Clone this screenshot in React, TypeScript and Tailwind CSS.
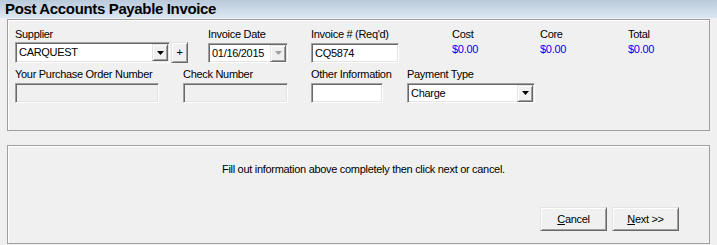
import React from 'react';

const sunken =
  'border border-t-[#a0a0a0] border-l-[#a0a0a0] border-b-white border-r-white shadow-[inset_1px_1px_0_#696969,inset_-1px_-1px_0_#e3e3e3]';
const raised =
  'border border-t-[#e3e3e3] border-l-[#e3e3e3] border-b-[#696969] border-r-[#696969] shadow-[inset_1px_1px_0_#fff,inset_-1px_-1px_0_#a0a0a0] bg-[#f0f0f0]';
const txt = 'text-[11px] tracking-[-0.3px] text-black whitespace-nowrap';

function Label({ children }: { children: React.ReactNode }) {
  return <div className={`h-[13px] leading-[13px] ${txt}`}>{children}</div>;
}

function Arrow({ disabled }: { disabled?: boolean }) {
  return (
    <svg width="7" height="4" viewBox="0 0 7 4">
      <polygon points="0,0 7,0 3.5,4" fill={disabled ? '#a0a0a0' : '#000'} />
    </svg>
  );
}

function DropBtn({ disabled }: { disabled?: boolean }) {
  return (
    <div className={`${raised} w-[16px] h-[17px] mr-[1px] flex items-center justify-center shrink-0`}>
      <Arrow disabled={disabled} />
    </div>
  );
}

function TextBox({ w, value, disabled }: { w: string; value?: string; disabled?: boolean }) {
  return (
    <div
      className={`${sunken} ${w} h-[20px] mt-[2px] flex items-center pl-[3px] ${txt} ${
        disabled ? 'bg-[#f0f0f0]' : 'bg-white'
      }`}
    >
      {value}
    </div>
  );
}

function Combo({ w, value, disabled, h = 'h-[20px]' }: { w: string; value: string; disabled?: boolean; h?: string }) {
  return (
    <div className={`${sunken} ${w} ${h} bg-white flex items-center pl-[3px] ${txt}`}>
      <span className="flex-1">{value}</span>
      <DropBtn disabled={disabled} />
    </div>
  );
}

function Money({ label }: { label: string }) {
  return (
    <div className="w-[88px] shrink-0">
      <Label>{label}</Label>
      <div className="mt-[2px] h-[13px] leading-[13px] text-[11px] tracking-[-0.3px] text-[#0000ff]">$0.00</div>
    </div>
  );
}

function Button({ children }: { children: React.ReactNode }) {
  return (
    <div className={`${raised} w-[67px] h-[24px] flex items-center justify-center ${txt}`}>{children}</div>
  );
}

export default function App() {
  return (
    <div className="w-[717px] h-[245px] bg-[#f0f0f0] font-['Liberation_Sans',Arial,sans-serif] overflow-hidden">
      <div className="h-[18px] bg-gradient-to-b from-[#b9cadb] to-[#dce7f2] pl-[5px] flex items-center">
        <span className="text-[15px] font-bold tracking-[-0.35px] text-black leading-[18px]">
          Post Accounts Payable Invoice
        </span>
      </div>

      <div className="mt-[1px] mx-[7px] h-[112px] border border-[#a0a0a0] shadow-[inset_1px_1px_0_#fff] pl-[7px] pt-[8px]">
        <div className="flex">
          <div className="w-[193px] shrink-0">
            <Label>Supplier</Label>
            <div className="flex mt-[1px]">
              <Combo w="w-[155px]" h="h-[21px]" value="CARQUEST" />
              <div className={`${raised} ml-[1px] w-[17px] h-[21px] flex items-center justify-center ${txt}`}>+</div>
            </div>
          </div>
          <div className="w-[103px] shrink-0">
            <Label>Invoice Date</Label>
            <div className="mt-[2px]">
              <Combo w="w-[80px]" value="01/16/2015" disabled />
            </div>
          </div>
          <div className="w-[141px] shrink-0">
            <Label>Invoice # (Req'd)</Label>
            <TextBox w="w-[88px]" value="CQ5874" />
          </div>
          <Money label="Cost" />
          <Money label="Core" />
          <Money label="Total" />
        </div>

        <div className="flex mt-[5px]">
          <div className="w-[168px] shrink-0">
            <Label>Your Purchase Order Number</Label>
            <TextBox w="w-[144px]" disabled />
          </div>
          <div className="w-[128px] shrink-0">
            <Label>Check Number</Label>
            <TextBox w="w-[105px]" disabled />
          </div>
          <div className="w-[96px] shrink-0">
            <Label>Other Information</Label>
            <TextBox w="w-[72px]" />
          </div>
          <div className="shrink-0">
            <Label>Payment Type</Label>
            <div className="mt-[2px]">
              <Combo w="w-[128px]" value="Charge" />
            </div>
          </div>
        </div>
      </div>

      <div className="mt-[14px] mx-[7px] h-[99px] border border-[#a0a0a0] shadow-[inset_1px_1px_0_#fff] flex flex-col">
        <div className={`pt-[17px] pl-[214px] h-[13px] leading-[13px] box-content ${txt}`}>
          Fill out information above completely then click next or cancel.
        </div>
        <div className="mt-auto mb-[12px] mr-[30px] flex justify-end gap-[5px]">
          <Button>
            <span className="underline">C</span>ancel
          </Button>
          <Button>
            <span className="underline">N</span>ext &gt;&gt;
          </Button>
        </div>
      </div>
    </div>
  );
}
